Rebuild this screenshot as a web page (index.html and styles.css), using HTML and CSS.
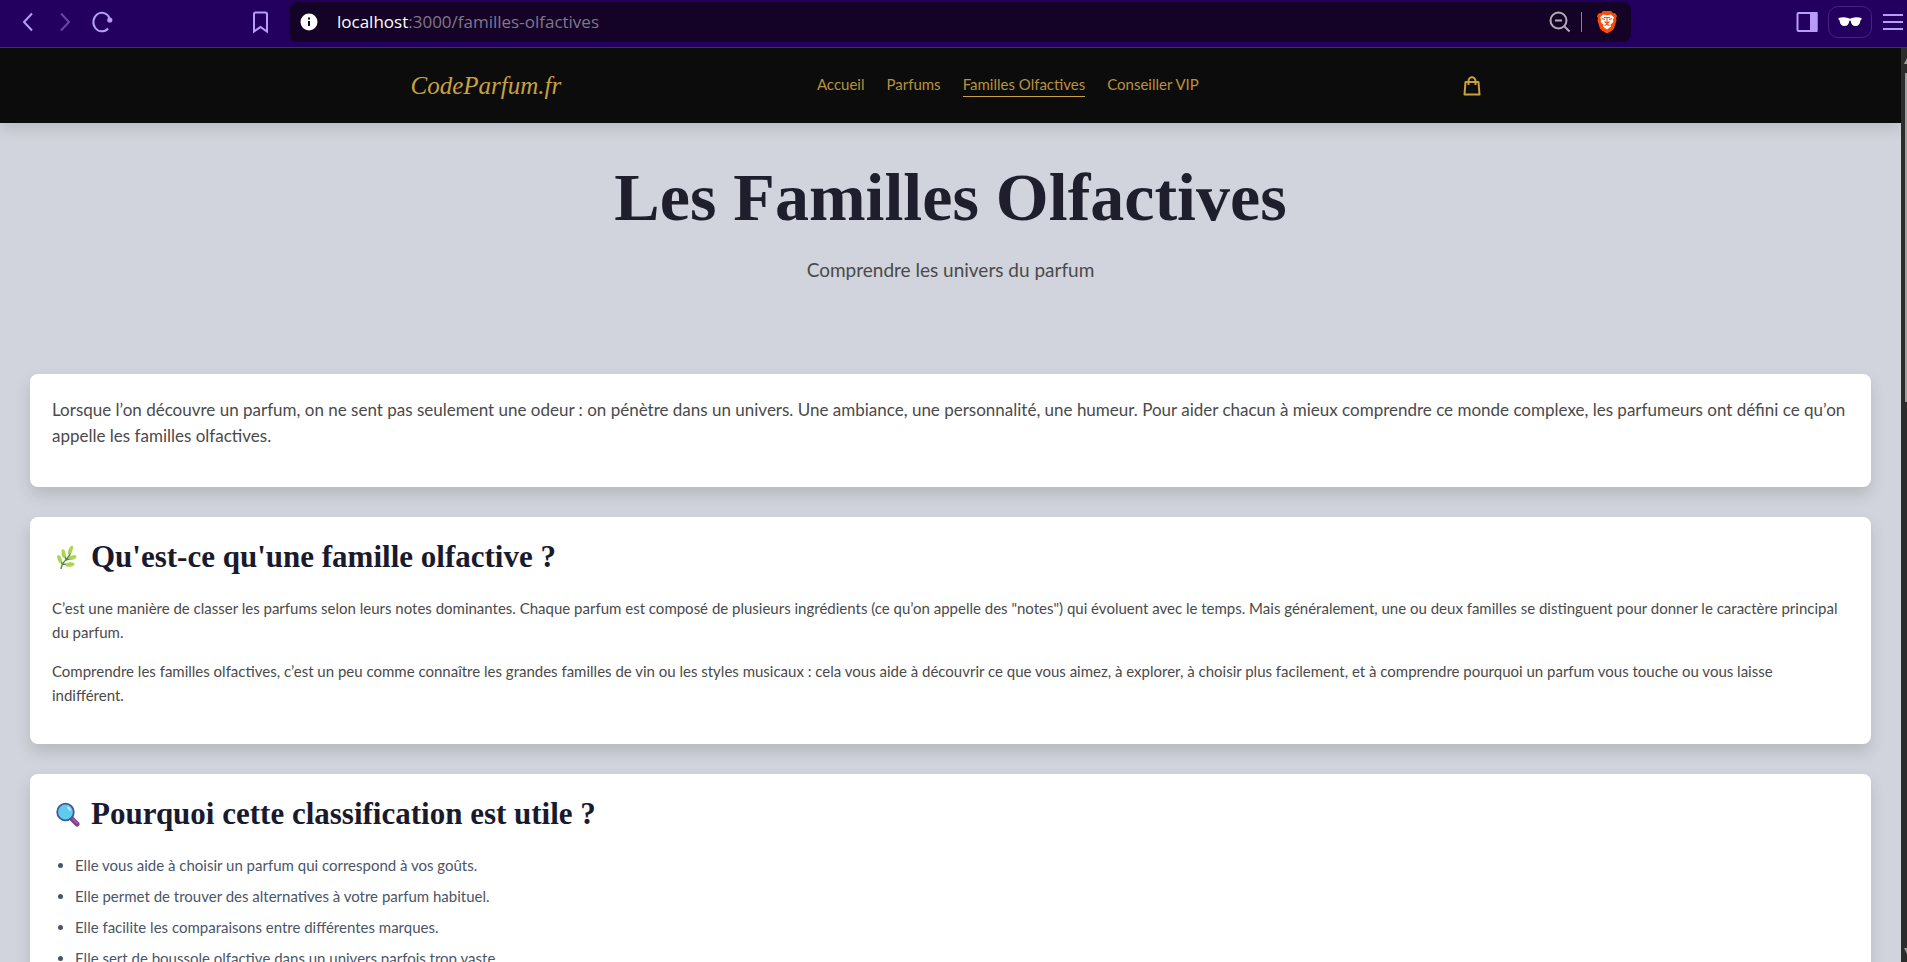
FILE: index.html
```html
<!DOCTYPE html>
<html lang="fr">
<head>
<meta charset="utf-8">
<title>Les Familles Olfactives</title>
<link rel="stylesheet" href="styles.css">
</head>
<body>
<div class="browser">
  <div class="toolbar">
    <div class="toolbar-nav">
      <button class="tool" aria-label="Retour"><svg width="22" height="24" viewBox="0 0 22 24"><path d="M15 3.500L7 12l8 8.500"/></svg></button>
      <button class="tool tool-off" aria-label="Suivant"><svg width="22" height="24" viewBox="0 0 22 24"><path d="M7 3.500L15 12l-8 8.500"/></svg></button>
      <button class="tool" aria-label="Recharger"><svg width="22" height="24" viewBox="0 0 22 24"><path d="M18.500 8A8.500 9.300 0 1 0 17 18.500"/><circle cx="18.800" cy="10" r="2.600" class="dot"/></svg></button>
    </div>
    <button class="tool" aria-label="Favori"><svg width="22" height="24" viewBox="0 0 22 24"><path d="M4 4q0-1.500 1.500-1.500h10q1.500 0 1.500 1.500v17.500l-6.500-4.500-6.500 4.500z"/></svg></button>
    <div class="address">
      <svg width="18" height="18" viewBox="0 0 18 18"><circle cx="9" cy="9" r="8.500" fill="#fff"/><path d="M9 8v5M9 4.500v2" stroke="#140326" stroke-width="2"/></svg>
      <div class="url"><span class="url-host">localhost</span>:3000/familles-olfactives</div>
      <button class="tool tool-grey" aria-label="Zoom"><svg width="22" height="22" viewBox="0 0 22 22"><circle cx="9.500" cy="9.500" r="8"/><path d="M15.500 15.500l5 5M6 9.500h7"/></svg></button>
      <span class="divider"></span>
      <button class="tool" aria-label="Brave Shields"><svg width="22" height="24" viewBox="0 0 22 24"><path d="M7 1h8l2 2.200 2-.2 2 3-1 2.500.5 2-2.500 8q-.7 1.500-7 5-6.300-3.500-7-5L1.500 10.500l.5-2L1 6l2-3 2 .2z" fill="#fb4b05" stroke="none"/><path d="M7 4.500l4 .8 4-.8 3 3-1 2 .3 2.500-3 3 .8 1.500-4.100 3-4.100-3 .8-1.500-3-3 .3-2.500-1-2z" fill="#fff" stroke="none"/><path d="M6 8.500l3 1M16 8.500l-3 1M8 7.500h6M11 8v4.500M8.500 11.500l2.500 2 2.500-2M8.500 15.500l2.500-1.200 2.500 1.200" stroke="#fb4b05" stroke-width="1.100"/></svg></button>
    </div>
    <div class="toolbar-end">
      <button class="tool" aria-label="Panneau latéral"><svg width="22" height="22" viewBox="0 0 22 22"><rect x="1.500" y="2" width="19" height="18" rx="1"/><path d="M15 2h5.500v18H15z" fill="#b79cf9"/></svg></button>
      <button class="tool private" aria-label="Navigation privée"><svg width="24" height="12" viewBox="0 0 24 12"><path d="M.5 2q5-1.500 9.500 0l2 .7 2-.7q4.500-1.500 9.500 0v1.600l-1 .6q-.5 5.800-5 5.800-4.300 0-4.800-5.300h-1.400q-.5 5.300-4.800 5.300-4.500 0-5-5.800l-1-.6z" fill="#fff" stroke="none"/></svg></button>
      <button class="tool" aria-label="Menu"><svg width="22" height="22" viewBox="0 0 22 22"><path d="M1 4h20M1 11h20M1 18h20"/></svg></button>
    </div>
  </div>
  <div class="viewport">
    <div class="page">
      <header class="site-header">
        <div class="site-bar">
          <a class="logo" href="#">CodeParfum.fr</a>
          <nav class="menu">
            <a href="#">Accueil</a>
            <a href="#">Parfums</a>
            <a href="#" class="current" aria-current="page">Familles Olfactives</a>
            <a href="#">Conseiller VIP</a>
          </nav>
          <button class="bag" aria-label="Panier"><svg width="18" height="20" viewBox="0 0 18 20"><path d="M2.500 6h13l1 12.500h-15zM5.500 9V5a3.500 3.800 0 0 1 7 0v4"/></svg></button>
        </div>
      </header>
      <main>
        <div class="hero">
          <h1>Les Familles Olfactives</h1>
          <p>Comprendre les univers du parfum</p>
        </div>
        <div class="cards">
          <section class="card intro">
            <p>Lorsque l’on découvre un parfum, on ne sent pas seulement une odeur : on pénètre dans un univers. Une ambiance, une personnalité, une humeur. Pour aider chacun à mieux comprendre ce monde complexe, les parfumeurs ont défini ce qu’on appelle les familles olfactives.</p>
          </section>
          <section class="card">
            <h2><svg class="emoji" width="30" height="26" viewBox="0 0 30 26"><path d="M9 25q1-6 5-9 4-4 5-9M10 20l-2-6M14 16l-2-7M14 16l7-2M11 20l7 1" fill="none" stroke="#5f8748" stroke-width="1.500"/><g fill="#a5d84a"><ellipse cx="7.500" cy="15" rx="1.900" ry="4.200" transform="rotate(-18 7.500 15)"/><ellipse cx="11.500" cy="9.500" rx="1.900" ry="4.200" transform="rotate(-8 11.500 9.500)"/><ellipse cx="18.500" cy="6" rx="1.900" ry="4.600" transform="rotate(22 18.500 6)"/><ellipse cx="20.500" cy="13.500" rx="4" ry="2" transform="rotate(-20 20.500 13.500)"/><ellipse cx="18" cy="20.500" rx="4.500" ry="2.200" transform="rotate(-8 18 20.500)"/></g></svg>Qu'est-ce qu'une famille olfactive ?</h2>
            <p>C’est une manière de classer les parfums selon leurs notes dominantes. Chaque parfum est composé de plusieurs ingrédients (ce qu’on appelle des "notes") qui évoluent avec le temps. Mais généralement, une ou deux familles se distinguent pour donner le caractère principal du parfum.</p>
            <p>Comprendre les familles olfactives, c’est un peu comme connaître les grandes familles de vin ou les styles musicaux : cela vous aide à découvrir ce que vous aimez, à explorer, à choisir plus facilement, et à comprendre pourquoi un parfum vous touche ou vous laisse indifférent.</p>
          </section>
          <section class="card">
            <h2><svg class="emoji" width="30" height="26" viewBox="0 0 30 26"><path d="M19 17l6 6" stroke="#7d4386" stroke-width="5" stroke-linecap="round"/><path d="M21 18l4 4" stroke="#9b5aa3" stroke-width="2" stroke-linecap="round"/><circle cx="13.500" cy="11" r="8.300" fill="#60cbec" stroke="#41589c" stroke-width="1.800"/><path d="M16 6.500q1.500.8 2 2.500" fill="none" stroke="#b3ecfa" stroke-width="2" stroke-linecap="round"/></svg>Pourquoi cette classification est utile ?</h2>
            <ul>
              <li>Elle vous aide à choisir un parfum qui correspond à vos goûts.</li>
              <li>Elle permet de trouver des alternatives à votre parfum habituel.</li>
              <li>Elle facilite les comparaisons entre différentes marques.</li>
              <li>Elle sert de boussole olfactive dans un univers parfois trop vaste.</li>
            </ul>
          </section>
        </div>
      </main>
    </div>
    <div class="scrollbar">
      <span class="arrow"></span>
      <span class="thumb"></span>
      <span class="arrow arrow-down"></span>
    </div>
  </div>
</div>
</body>
</html>
```
FILE: styles.css
```css
* { box-sizing: border-box; }
body, h1, h2, p, ul { margin: 0; padding: 0; }
body { font-family: Lato, "Open Sans", sans-serif; overflow: hidden; }
button { background: none; border: 0; padding: 0; font: inherit; }
a { color: inherit; text-decoration: none; }

.browser { height: 100vh; display: flex; flex-direction: column; }

.toolbar {
  flex: none;
  display: flex;
  align-items: center;
  height: 48px;
  padding: 0 3px 3px 17px;
  background: #23005f;
  border-bottom: 1px solid #4a2391;
}
.toolbar-nav { display: flex; gap: 15px; margin-right: 137px; }
.tool { display: flex; align-items: center; justify-content: center; }
.tool svg { fill: none; stroke: #b79cf9; stroke-width: 2; }
.tool .dot { fill: #b79cf9; stroke: none; }
.tool-off { opacity: 0.45; }
.tool-grey svg { stroke: #b3adba; }
.address {
  flex: 1;
  display: flex;
  align-items: center;
  gap: 10px;
  height: 40px;
  margin: 0 165px 0 17px;
  padding: 0 13px 0 11px;
  border-radius: 8px;
  background: #140326;
}
.url { flex: 1; margin-left: 9px; font: 17px/24px "Open Sans", sans-serif; color: #80778c; }
.url-host { color: #fff; }
.divider { width: 1px; height: 20px; margin-right: 4px; background: #8b8494; }
.toolbar-end { display: flex; align-items: center; gap: 10px; }
.private { width: 44px; height: 32px; border: 1px solid #45227f; border-radius: 10px; }

.viewport { flex: 1; min-height: 0; display: flex; }
.page { flex: 1; overflow: hidden; background: #d1d4dc; }

.site-header { position: relative; background: #0c0c0c; box-shadow: 0 6px 14px rgba(0, 0, 0, 0.11); }
.site-bar {
  display: flex;
  align-items: center;
  justify-content: space-between;
  height: 75px;
  max-width: 1080px;
  margin: 0 auto;
}
.logo { font: italic 25px/36px "Liberation Serif", serif; color: #c9a23c; }
.menu { display: flex; gap: 22px; padding-bottom: 2px; font-size: 15px; line-height: 24px; color: #b8923a; }
.menu a { border-bottom: 1px solid transparent; }
.menu .current { border-color: #c9a23c; }
.bag { padding: 0 9px; }
.bag svg { display: block; fill: none; stroke: #c9a23c; stroke-width: 2; stroke-linejoin: round; }

.hero { padding: 38px 30px 89px; text-align: center; }
.hero h1 { font: bold 68px/72px "Liberation Serif", serif; color: #1e1e2d; }
.hero p { margin-top: 22px; font-size: 19px; line-height: 30px; color: #4a4a4a; }

.cards { display: flex; flex-direction: column; gap: 30px; padding: 0 30px 30px; }
.card {
  padding: 22px;
  border-radius: 8px;
  background: #fff;
  box-shadow: 0 8px 16px rgba(0, 0, 0, 0.13);
}
.card h2 {
  display: flex;
  align-items: center;
  gap: 9px;
  margin-bottom: 21px;
  font: bold 31px/36px "Liberation Serif", serif;
  color: #1a1a2e;
}
.emoji { flex: none; }
.card p { margin-bottom: 15px; padding-right: 6px; font-size: 15px; line-height: 24px; color: #4a4a4a; }
.intro { padding-top: 23px; }
.intro p { margin-bottom: 16px; padding-right: 0; font-size: 17px; line-height: 26px; }
.card ul { padding-left: 23px; font-size: 15px; line-height: 24px; color: #4a5568; }
.card li { margin-bottom: 7px; }

.scrollbar { flex: none; display: flex; flex-direction: column; align-items: flex-end; width: 6px; background: #2c2c2c; }
.arrow { width: 3px; height: 6px; margin: 10px 0 9px; background: #9f9f9f; clip-path: polygon(100% 0, 0 100%, 100% 100%); }
.arrow-down { margin: auto 0 8px; clip-path: polygon(0 0, 100% 0, 100% 100%); }
.thumb { width: 2px; height: 36%; background: #9f9f9f; }
```
